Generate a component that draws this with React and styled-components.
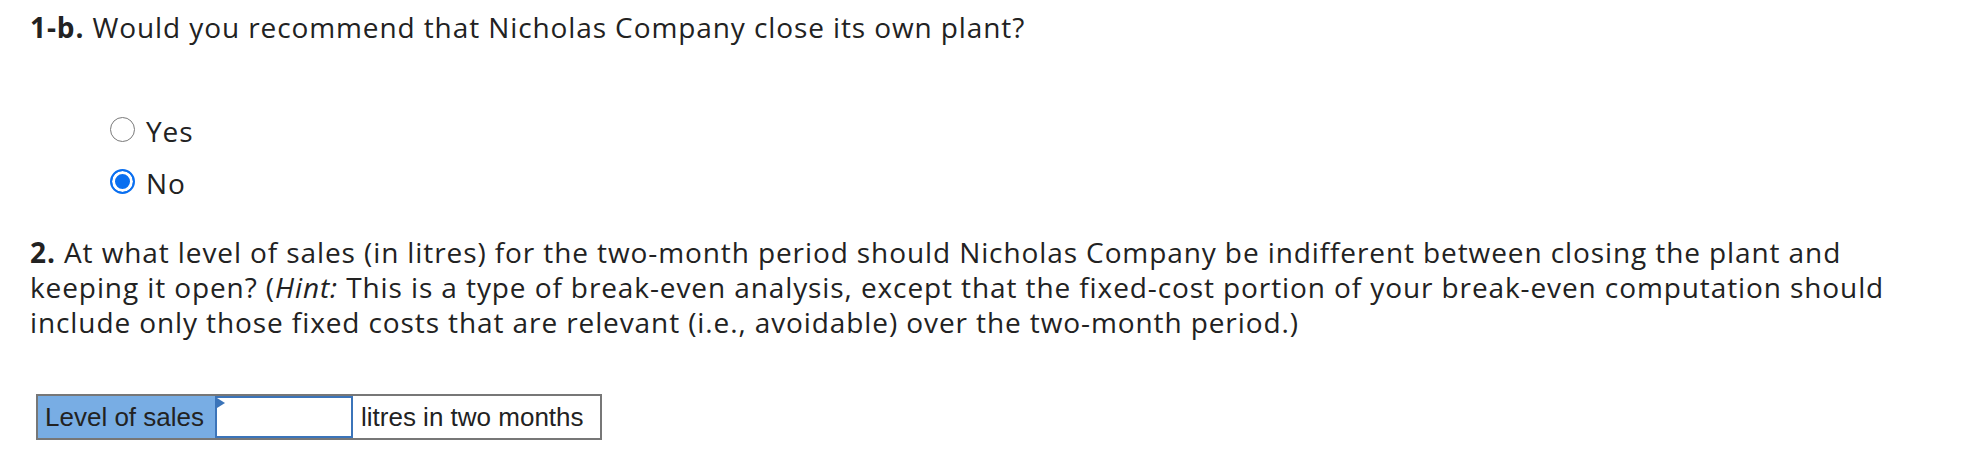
import React from "react";
import styled, { createGlobalStyle } from "styled-components";

const GlobalStyle = createGlobalStyle`
    body {
        margin: 0;
        background: #fff;
        font-family: "Open Sans", Lato, sans-serif;
        color: #222;
    }
`

const Page = styled.div`
    padding: 10px 0 0 30px;
    width: 1892px;
`

const Question = styled.p`
    margin: 0;
    font-size: 28px;
    line-height: 35px;
    letter-spacing: 0.9px;
`

const Num = styled.strong`
    font-weight: 700;
`

const Options = styled.div`
    display: flex;
    flex-direction: column;
    gap: 17px;
    margin: 69px 0 34px 80px;
`

const Option = styled.label`
    display: flex;
    align-items: center;
    gap: 11px;
    font-size: 28px;
    line-height: 35px;
    letter-spacing: 0.9px;
`

const Radio = styled.input.attrs({ type: "radio" })`
    appearance: none;
    margin: 0;
    margin-top: -5px;
    width: 25px;
    height: 25px;
    border-radius: 50%;
    border: 1.5px solid #7a7a7a;
    background: #fff;
    box-sizing: border-box;

    &:checked {
        border: 2px solid #0a6ff0;
        background: #0a6ff0;
        box-shadow: inset 0 0 0 3px #fff;
    }
`

const AnswerRow = styled.div`
    display: inline-flex;
    margin: 54px 0 0 6px;
    border: 2px solid #777;
    font-family: "Liberation Sans", Arial, sans-serif;
    font-size: 26px;
    line-height: 42px;
    color: #222;
`

const Cell = styled.div`
    box-sizing: border-box;
    height: 42px;
    width: ${({ w }) => w}px;
    padding-left: ${({ pad }) => pad || 0}px;
    background: ${({ bg }) => bg || "#fff"};
    white-space: nowrap;
`

const InputCell = styled.div`
    position: relative;
    box-sizing: border-box;
    width: 138px;
    height: 42px;
    border: 2px solid #3b74b9;
    background: #fff;
`

const Marker = styled.span`
    position: absolute;
    left: 0;
    top: 0;
    width: 0;
    height: 0;
    border-top: 5px solid transparent;
    border-bottom: 5px solid transparent;
    border-left: 8px solid #3b74b9;
`

const Field = styled.input`
    width: 100%;
    height: 100%;
    border: none;
    outline: none;
    padding: 0 6px;
    box-sizing: border-box;
    font: inherit;
    background: transparent;
`

const App = () => {
    return (
        <>
            <GlobalStyle />
            <Page>
                <Question>
                    <Num>1-b.</Num> Would you recommend that Nicholas Company close its own plant?
                </Question>
                <Options>
                    <Option>
                        <Radio name="close" />
                        Yes
                    </Option>
                    <Option>
                        <Radio name="close" defaultChecked />
                        No
                    </Option>
                </Options>
                <Question>
                    <Num>2.</Num> At what level of sales (in litres) for the two-month period should Nicholas Company be indifferent between closing the plant and keeping it open? (<em>Hint:</em> This is a type of break-even analysis, except that the fixed-cost portion of your break-even computation should include only those fixed costs that are relevant (i.e., avoidable) over the two-month period.)
                </Question>
                <AnswerRow>
                    <Cell w={177} pad={7} bg="#78ade4">Level of sales</Cell>
                    <InputCell>
                        <Marker />
                        <Field />
                    </InputCell>
                    <Cell w={247} pad={8}>litres in two months</Cell>
                </AnswerRow>
            </Page>
        </>
    )
}

export default App
